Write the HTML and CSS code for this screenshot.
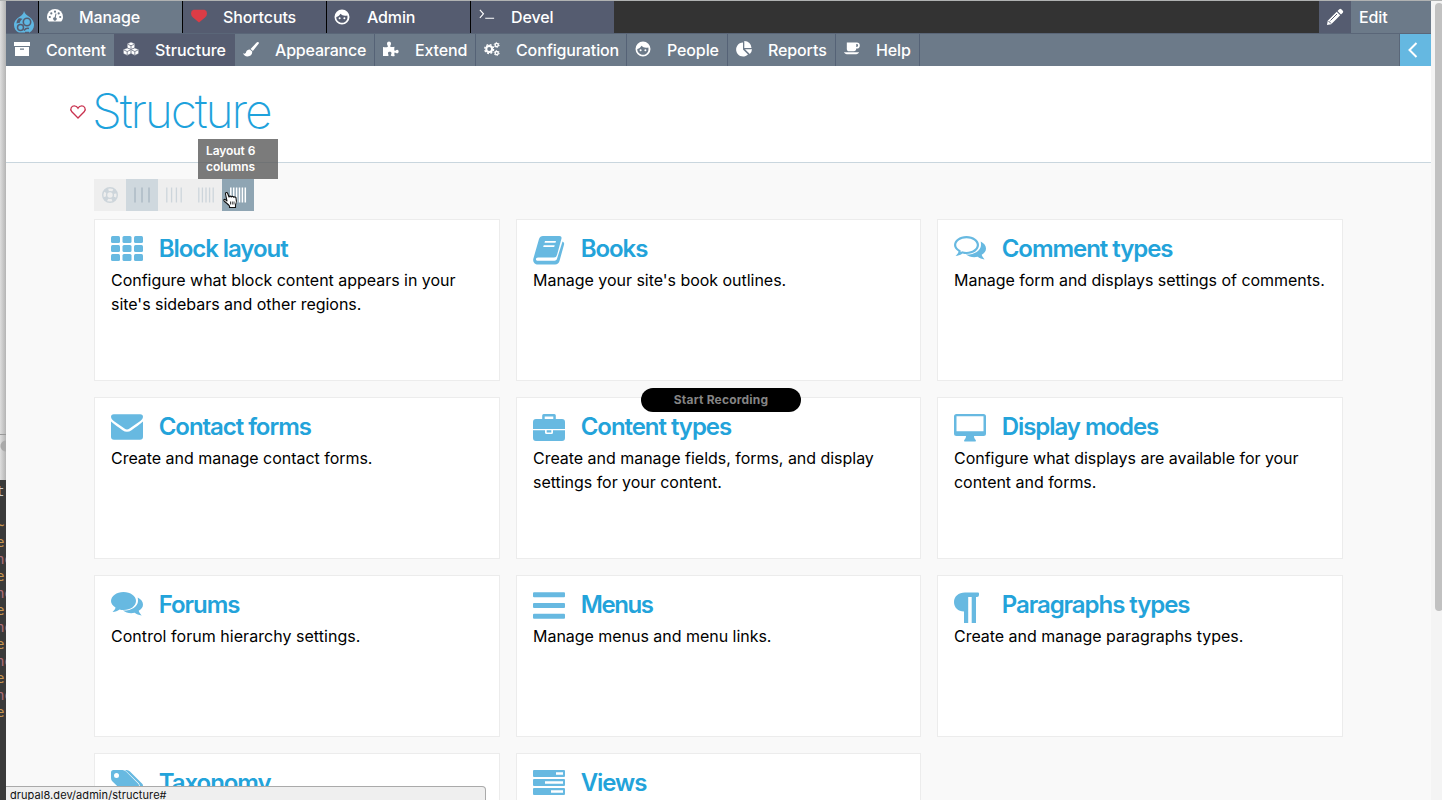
FILE: index.html
```html
<!DOCTYPE html>
<html lang="en">
<head>
<meta charset="utf-8">
<title>Structure</title>
<link rel="stylesheet" href="styles.css">
</head>
<body>
<svg class="defs" width="0" height="0">
  <defs>
    <symbol id="face" viewBox="0 0 16 16"><path fill-rule="evenodd" d="M8 .5a7.5 7.5 0 1 0 0 15 7.5 7.5 0 0 0 0-15zM2.3 8c2.2-.6 3.400-1.800 4.200-3.200C8 6.600 10.500 7.200 13.300 6.500c1 3.600-1.500 7.300-5.200 7.300C4.700 13.800 2.100 11.200 2.300 8z"/><circle cx="5.600" cy="9.200" r="1"/><circle cx="10.400" cy="9.200" r="1"/></symbol>
  </defs>
</svg>
<div class="desktop">
  <div class="behind">
    <div class="behind-window"><span class="knob"></span></div>
    <pre class="editor"><span class="w">t</span>

<span class="o">~</span>
<span class="o">e'</span>
<span class="p">ne</span>
<span class="o">e'</span>
<span class="p">ne</span>
<span class="o">e'</span>
<span class="p">ne</span>
<span class="o">e'</span>
<span class="p">ne</span>
<span class="o">e'</span>
<span class="p">ne</span>
<span class="o">e'</span></pre>
  </div>
  <div class="browser">
    <nav class="bar">
      <a class="home"><svg width="22" height="24" viewBox="0 0 22 24"><path fill="#5fb7e2" d="M11 1c.8 3 3 4 5.500 6C19 9 21 11.500 21 15c0 3.500-2 6.200-4.500 7.500H6C3 21.500 1 18.500 1 15c0-4 3-6.500 6-8.500C9 5 10.500 4 11 1z"/><path fill="#555c70" d="M5.500 8.500c1.500-.3 3-.2 4 .5-1.500 1-2.500 2.500-3 4.300-1-.5-2-.5-3 .2.100-2 .8-3.600 2-5z"/><circle cx="14" cy="12" r="3.700" fill="#5fb7e2" stroke="#555c70" stroke-width="1.600"/><circle cx="7.500" cy="17.500" r="3" fill="#5fb7e2" stroke="#555c70" stroke-width="1.500"/><path fill="none" stroke="#555c70" stroke-width="1.500" d="M11 20.500c1.500-2 3-2.500 5-2M12 22.500h4"/></svg></a>
      <a class="tab active"><svg width="16" height="16" viewBox="0 0 16 16"><path fill="#fff" d="M1.800 13.500C.5 12 0 10.500 0 9a8 8 0 0 1 16 0c0 1.500-.5 3-1.800 4.500z"/><g fill="#6c7a89"><circle cx="2.800" cy="9" r="1.100"/><circle cx="4.300" cy="5.400" r="1.100"/><circle cx="8" cy="3.700" r="1.100"/><circle cx="11.700" cy="5.400" r="1.100"/><circle cx="13.200" cy="9" r="1.100"/><path d="M8.500 5.500l1 .3-.8 3.600a1.700 1.700 0 1 1-1-.2z"/></g></svg><span>Manage</span></a>
      <a class="tab"><svg width="16" height="16" viewBox="0 0 16 16"><path fill="#dc3c46" d="M2.500 1.800h11Q16 2.500 16 5.500q0 2-2 4L8 14.500 2 9.500Q0 7.500 0 5.500 0 2.500 2.500 1.800z"/></svg><span>Shortcuts</span></a>
      <a class="tab face"><svg width="16" height="16" fill="#fff"><use href="#face"/></svg><span>Admin</span></a>
      <a class="tab devel"><svg width="18" height="16" viewBox="0 0 18 16" fill="none" stroke="#fff" stroke-width="1.300"><path d="M1 1l4 4.500L1 10M7 10.500h10"/></svg><span>Devel</span></a>
      <span class="fill"></span>
      <a class="pencil"><svg width="18" height="18" viewBox="0 0 18 18"><path fill="#fff" d="M11.500 3l1.800-1.800q1-.9 2 0l1.500 1.500q.9 1 0 2L15 6.500zM10.700 3.800l3.500 3.500-9 9L1 17l.7-4.200z"/><path stroke="#555c70" d="M2.500 13l2.500 2.500M11 6l-6.500 6.500"/></svg></a>
      <a class="edit">Edit</a>
    </nav>
    <nav class="tray">
      <a class="c1"><svg width="16" height="16" viewBox="0 0 16 16"><path fill="#fff" fill-rule="evenodd" d="M0 1h16v4H0zM1 6h14v9H1zm5 1.500v1.300h4V7.500z"/></svg><span>Content</span></a>
      <a class="c2 active"><svg width="18" height="16" viewBox="0 0 18 16"><g fill="#fff" stroke="#555c70" stroke-width=".5"><path d="M9 .2l4.200 1.900v4.500L9 8.600l-4.200-2V2.100z"/><path d="M4.700 6.800l4.300 1.900v4.500l-4.300 2-4.300-2V8.700zM13.300 6.800l4.300 1.900v4.500l-4.300 2-4.300-2V8.700z"/></g><path fill="none" stroke="#555c70" stroke-width=".8" d="M5.500 2.800L9 4.300l3.500-1.500M9 4.300v4M1.200 9.200l3.500 1.600 3.500-1.600M4.700 10.800v4M9.800 9.200l3.500 1.600 3.500-1.600M13.300 10.800v4"/></svg><span>Structure</span></a>
      <a class="c3"><svg width="17" height="17" viewBox="0 0 17 17" fill="#fff"><path d="M16 .5q1.300.4.600 2L10.500 10 8 8l6.500-7q.8-.8 1.500-.5zM7.300 8.600l2.500 2.100c.3 3-1.800 5.300-5 5.300C2.200 16 .8 14.500 0 12.500c1.500.8 2.600.7 3.200-1 .6-1.900 2-3 4.100-2.900z"/></svg><span>Appearance</span></a>
      <a class="c4"><svg width="16" height="16" viewBox="0 0 16 16" fill="#fff"><path d="M0 6c2 .5 4 .4 4.800-.3.500-.8-.8-1.500-.8-3 0-3 4-3 4 0 0 1.500-1.300 2.200-.6 3 .8.600 2.800.3 4.100 0-.3 2-.4 3.500.2 4 .8.400 1.300-1 2.500-1 2 0 1.900 3.600 0 3.600-1.200 0-1.700-1.200-2.500-.8-.6.500-.3 2 0 3.500-1.700.3-3.200.2-3.700-.3-.7-.8.500-1.300.5-2.500 0-1.800-3.500-1.900-3.500 0 0 1.200 1 1.700.4 2.500-.7.600-3.400.4-5.400.3z"/></svg><span>Extend</span></a>
      <a class="c5"><svg width="17" height="16" viewBox="0 0 17 16" fill="none" stroke="#fff"><circle cx="5.500" cy="8" r="3.100" stroke-width="2.200"/><circle cx="5.500" cy="8" r="4.700" stroke-width="1.500" stroke-dasharray="2.100 1.590"/><circle cx="13.500" cy="3.700" r="1.700" stroke-width="1.500"/><circle cx="13.500" cy="3.700" r="2.700" stroke-dasharray="1.400 1.427"/><circle cx="13.500" cy="12.300" r="1.700" stroke-width="1.500"/><circle cx="13.500" cy="12.300" r="2.700" stroke-dasharray="1.400 1.427"/></svg><span>Configuration</span></a>
      <a class="c6"><svg width="16" height="16" fill="#fff"><use href="#face"/></svg><span>People</span></a>
      <a class="c7"><svg width="16" height="16" viewBox="0 0 16 16" fill="#fff"><path d="M7 1.500V8.500l5 5A7 7 0 1 1 7 1.500zM8.300 0A7 7 0 0 1 15.500 7H8.300zM9 8.300h7a7 7 0 0 1-2.200 4.800z"/></svg><span>Reports</span></a>
      <a class="c8"><svg width="17" height="16" viewBox="0 0 17 16" fill="#fff"><path fill-rule="evenodd" d="M3 1h10.500a3.300 3.300 0 0 1 0 6.600H13c0 2-1 2.900-2.500 2.900h-5C4 10.500 3 9.500 3 8zm10 1.800v3h.5a1.500 1.500 0 0 0 0-3zM0 11.500h16c-.5 1.200-1.500 2-3 2H3c-1.500 0-2.500-.8-3-2z"/></svg><span>Help</span></a>
      <span class="fill"></span>
      <a class="collapse"><svg width="10" height="16" viewBox="0 0 10 16"><path fill="none" stroke="#fff" stroke-width="2" d="M8.500 1L1.500 8l7 7"/></svg></a>
    </nav>
    <header class="head">
      <svg class="fav" width="16" height="14" viewBox="0 0 16 14"><path fill="none" stroke="#c93350" stroke-width="1.300" d="M8 13L1.600 6.500C-.5 3.500 2 .8 4.300.8 6.300.8 7.400 2 8 3.100 8.600 2 9.700.8 11.700.8 14 .8 16.500 3.500 14.400 6.500z"/></svg>
      <h1>Structure</h1>
    </header>
    <main>
      <div class="layouts">
        <a><svg width="16" height="16" viewBox="0 0 16 16" fill="none" stroke="#cdd5db"><circle cx="8" cy="8" r="7.300" stroke-width="1.400"/><circle cx="8" cy="8" r="3.400" stroke-width="1.400"/><circle cx="8" cy="8" r="5.400" stroke-width="3.600" stroke-dasharray="4 4.482" stroke-dashoffset="-2.240"/></svg></a>
        <a class="on"><svg width="16" height="16" viewBox="0 0 16 16" stroke="#aebcc6" stroke-width="1.600"><path d="M1 .5v15M8 .5v15M15 .5v15"/></svg></a>
        <a><svg width="16" height="16" viewBox="0 0 16 16" stroke="#cdd5db" stroke-width="1.300"><path d="M.8 .5v15M5.600 .5v15M10.400 .5v15M15.200 .5v15"/></svg></a>
        <a><svg width="16" height="16" viewBox="0 0 16 16" stroke="#cdd5db" stroke-width="1.300"><path d="M.8 .5v15M4.400 .5v15M8 .5v15M11.600 .5v15M15.200 .5v15"/></svg></a>
        <a class="hover"><svg width="16" height="16" viewBox="0 0 16 16" stroke="#fff" stroke-width="1.500"><path d="M.8 .5v15M3.700 .5v15M6.600 .5v15M9.500 .5v15M12.400 .5v15M15.300 .5v15"/></svg>
          <span class="tip">Layout 6<br>columns</span>
          <svg class="pointer" width="16" height="18" viewBox="0 0 16 18"><path fill="#fff" stroke="#111" stroke-width="1.100" stroke-linejoin="round" d="M4 10L2.500 3c-.3-1.700 1.500-2.200 2.200-.5L6 6c.3-1.200 2-1.200 2.300 0 .6-1 2.200-.8 2.400.3.800-.8 2.200-.4 2.300.7.800 2.500.7 4.500-.5 7V16.500h-6V15C5 13 3 12 1 9.800c-.7-1 .8-2 1.700-1z"/><path stroke="#111" stroke-width=".8" d="M7.500 10.500v3M9.300 10.500v3M11 10.500v3"/></svg>
        </a>
      </div>
      <div class="cards">
        <section class="card"><h2><svg width="32" height="32" viewBox="0 0 32 32"><g><rect y="3" width="9" height="7" rx="1.500"/><rect x="11.500" y="3" width="9" height="7" rx="1.500"/><rect x="23" y="3" width="9" height="7" rx="1.500"/><rect y="12" width="9" height="7" rx="1.500"/><rect x="11.500" y="12" width="9" height="7" rx="1.500"/><rect x="23" y="12" width="9" height="7" rx="1.500"/><rect y="21" width="9" height="7" rx="1.500"/><rect x="11.500" y="21" width="9" height="7" rx="1.500"/><rect x="23" y="21" width="9" height="7" rx="1.500"/></g></svg><span>Block layout</span></h2><p>Configure what block content appears in your<br>site's sidebars and other regions.</p></section>
        <section class="card"><h2><svg width="32" height="32" viewBox="0 0 32 32"><path fill-rule="evenodd" d="M10 3h16.500q2.500 0 2 2.500L24 22q-.6 2.500-3 2.500H5c-1.800 0-2.500 1.500-1.700 2.700.4.500 1 .6 1.700.6h16.500c1.200 0 2-.5 2.400-1.700L29.500 8.500c1.500.7 1.900 1.700 1.500 3.200L26.500 28c-.7 2.200-2 3.500-4.500 3.500H5c-3.500 0-5.500-3-4.600-6L6 6c.7-2 2-3 4-3zm2 5l-.5 1.700h11L23 8zm-1.300 4.300l-.5 1.700h11l.5-1.700z"/></svg><span>Books</span></h2><p>Manage your site's book outlines.</p></section>
        <section class="card"><h2><svg width="32" height="32" viewBox="0 0 32 32"><path fill-rule="evenodd" d="M12.500 3C19.500 3 25 7 25 12s-5.500 9-12.500 9q-2 0-4-.5C6.500 22 4.500 22.600 1.500 23c1.800-1.600 2.700-2.900 3-4.500C1.600 16.800 0 14.500 0 12c0-5 5.500-9 12.500-9zm0 2.200C6.800 5.200 2.200 8.300 2.200 12c0 2.200 1.700 4 4.500 5.600v1.600l1.300-.9c1.500.4 3 .6 4.500.6 5.700 0 10.300-3.200 10.300-6.900s-4.600-6.800-10.300-6.800z"/><path d="M26.700 8.500C30 10.200 32 12.600 32 15.500c0 2.700-1.600 4.800-4.300 6.300.4 1.500 1.500 3 3 4.700-3-.3-5.200-1.300-7-2.700-4.300.9-8.800.1-11.800-2.200 8 .3 15.100-3.800 15.100-9.600q0-2-.3-3.500z"/></svg><span>Comment types</span></h2><p>Manage form and displays settings of comments.</p></section>
        <section class="card"><h2><svg width="32" height="32" viewBox="0 0 32 32"><path d="M2.800 3.200h26.400Q32 3.200 32 6q0 2-2.700 4L18.500 17.500q-2.500 1.800-5 0L2.700 10Q0 8 0 6q0-2.800 2.800-2.800zM0 10.500c3.500 3.200 7.500 5.800 11.500 8.700q4.500 3.300 9 0C24.500 16.300 28.500 13.700 32 10.500V25.800q0 3-3 3H3q-3 0-3-3z"/></svg><span>Contact forms</span></h2><p>Create and manage contact forms.</p></section>
        <section class="card"><h2><svg width="32" height="32" viewBox="0 0 32 32"><path fill-rule="evenodd" d="M9.200 8V4.500Q9.200 3 10.700 3h10.600q1.500 0 1.500 1.500V8H29q3 0 3 3v7H0v-7q0-3 3-3zm2.500 0h8.600V5.500h-8.600zM0 19.300h12v2.200q0 1.500 1.500 1.500h5q1.500 0 1.500-1.500v-2.200h12V27q0 3-3 3H3q-3 0-3-3zM13.700 19.300h4.600v2.200h-4.600z"/></svg><span>Content types</span></h2><p>Create and manage fields, forms, and display<br>settings for your content.</p></section>
        <section class="card"><h2><svg width="32" height="32" viewBox="0 0 32 32"><path fill-rule="evenodd" d="M2.500 3h27Q32 3 32 5.500v17Q32 25 29.500 25H20c0 2 .8 2.800 1.500 3.700.8.900.5 1.800-.7 1.800h-9.600c-1.200 0-1.500-.9-.7-1.800.700-.9 1.500-1.700 1.500-3.700H2.500Q0 25 0 22.500v-17Q0 3 2.500 3zm0 2.300v15h27v-15z"/></svg><span>Display modes</span></h2><p>Configure what displays are available for your<br>content and forms.</p></section>
        <section class="card"><h2><svg width="32" height="32" viewBox="0 0 32 32"><path d="M12.500 3C19.500 3 25 7 25 12s-5.500 9-12.500 9q-2 0-4-.5C6.500 22 4.500 22.600 1.500 23c1.800-1.600 2.700-2.900 3-4.500C1.600 16.800 0 14.500 0 12c0-5 5.500-9 12.500-9z"/><path d="M26.700 8.500C30 10.200 32 12.600 32 15.500c0 2.700-1.600 4.800-4.300 6.300.4 1.500 1.500 3 3 4.700-3-.3-5.200-1.300-7-2.700-4.300.9-8.800.1-11.800-2.200 8 .3 15.100-3.800 15.100-9.600q0-2-.3-3.500z"/></svg><span>Forums</span></h2><p class="wide">Control forum hierarchy settings.</p></section>
        <section class="card"><h2><svg width="32" height="32" viewBox="0 0 32 32"><rect y="3.300" width="32" height="5" rx="1"/><rect y="14" width="32" height="5" rx="1"/><rect y="24.700" width="32" height="5" rx="1"/></svg><span class="tight">Menus</span></h2><p>Manage menus and menu links.</p></section>
        <section class="card"><h2><svg width="32" height="32" viewBox="0 0 32 32"><path d="M11 3.500h13q1 0 1 1V6q0 2-2 2h-1v26h-4.300V8h-3.500v26H10V22.500C4 22.500 0 18.500 0 13S4.500 3.500 11 3.500z"/></svg><span>Paragraphs types</span></h2><p>Create and manage paragraphs types.</p></section>
        <section class="card"><h2><svg width="32" height="32" viewBox="0 0 32 32"><path fill-rule="evenodd" d="M2.500 3h9q2 0 3.500 1.500L27 16.500q2 2 0 4L19.500 28q-2 2-4 0L1.500 14.500Q0 13 0 11V5.500Q0 3 2.500 3zM5.500 6a2.500 2.500 0 1 0 0 5 2.500 2.500 0 0 0 0-5z"/><path d="M14 3h1.500q2 0 3.500 1.500L31 16.500q2 2 0 4L23.500 28q-1.500 1.500-3.500.5L28 20.500q1.500-2 0-4z"/></svg><span>Taxonomy</span></h2></section>
        <section class="card"><h2><svg width="32" height="32" viewBox="0 0 32 32"><path fill-rule="evenodd" d="M1 3h30q1 0 1 1v5q0 1-1 1H1q-1 0-1-1V4q0-1 1-1zm22 2.300v2.400h7V5.300zM1 12h30q1 0 1 1v5q0 1-1 1H1q-1 0-1-1v-5q0-1 1-1zm11 2.300v2.400h18v-2.400zM1 21h30q1 0 1 1v5q0 1-1 1H1q-1 0-1-1v-5q0-1 1-1zm17 2.300v2.400h12v-2.400z"/></svg><span>Views</span></h2></section>
      </div>
    </main>
  </div>
  <div class="scroll"><span></span></div>
  <div class="record">Start Recording</div>
  <div class="status">drupal8.dev/admin/structure#</div>
</div>
</body>
</html>
```
FILE: styles.css
```css
* { box-sizing: border-box; }
body { margin: 0; font-family: Inter, "Liberation Sans", sans-serif; font-size: 16px; }
svg { display: block; flex: none; overflow: visible; }
.defs { position: absolute; }
.desktop { position: relative; display: grid; grid-template-columns: 6px 1425px 11px; width: 1442px; height: 800px; overflow: hidden; border-top: 1px solid #b0b2b2; }
.behind { display: flex; flex-direction: column; height: 799px; overflow: hidden; background: #3a3a3a; }
.behind-window { height: 479px; flex: none; padding-top: 433px; background: linear-gradient(90deg, #dedede, #b4b4b4); }
.knob { display: block; height: 23px; border-top: 1px solid #999; background: radial-gradient(circle at 6px 11px, #aaa 5px, transparent 6px); }
.editor { margin: 3px 0 0 -4px; font: 14px/17px "DejaVu Sans Mono", monospace; }
.editor .w { color: #ccc; }
.editor .o { color: #c89650; }
.editor .p { color: #b06f78; }
.browser { height: 799px; overflow: hidden; background: #f9f9f9; }
.bar, .tray { display: flex; color: #fff; font-weight: 500; letter-spacing: -.12px; }
.bar { height: 32px; background: #333; }
.bar a { display: flex; line-height: 32px; background: #555c70; }
.bar .home { width: 33px; padding: 9px 0 0 7px; border-right: 1px solid #000; }
.bar .tab { width: 144px; padding-left: 8px; border-right: 1px solid #000; }
.bar .tab svg { margin: 7px 16px 0 0; width: 16px; }
.bar .face svg { margin: 8px 17px 0 -1px; }
.bar .active, .bar .edit { background: #6c7a89; }
.bar .devel { width: 143px; border-right: 0; }
.fill { flex: 1; }
.bar .pencil { width: 32px; padding: 7px; }
.bar .edit { width: 80px; padding-left: 8px; }
.tray { height: 33px; border-top: 1px solid #5a6678; background: #6c7a89; }
.tray a { display: flex; line-height: 32px; padding-left: 8px; border-right: 1px solid #556276; }
.tray a svg { width: 16px; margin: 7px 16px 0 0; }
.tray .active { background: #555c70; }
.c1 { width: 108px; } .c2 { width: 121px; } .c3 { width: 140px; } .c4 { width: 101px; }
.c5 { width: 151px; } .c6 { width: 101px; } .c7 { width: 108px; } .c8 { width: 84px; }
.tray .c1 { border-right: 0; } .tray .c2 { border-right: 0; padding-left: 9px; letter-spacing: -.02px; }
.tray .c3 { letter-spacing: -.2px; }
.tray .collapse { width: 32px; padding-left: 8px; border-left: 1px solid #5a6678; border-right: 0; background: #65b8e1; }
.tray .collapse svg { width: 10px; margin: 8px 0 0; }
.head { display: flex; height: 97px; padding: 21px 0 0 64px; background: #fff; border-bottom: 1px solid #c9d6de; }
.fav { margin: 18px 6px 0 0; }
h1 { margin: 0; font-size: 48px; line-height: 48px; font-weight: 200; letter-spacing: -2.15px; color: #1ea2dc; }
main { padding: 16px 88px 0; }
.layouts { display: flex; width: 160px; height: 32px; background: #eee; }
.layouts a { position: relative; width: 32px; height: 32px; padding: 8px; }
.layouts .on { background: #cfd8de; }
.layouts .hover { background: #8fa5b3; }
.tip { position: absolute; left: -24px; top: -40px; width: 80px; height: 40px; padding: 4px 8px; background: rgba(90, 90, 90, .8); color: #fff; font-size: 12px; line-height: 16px; font-weight: 600; letter-spacing: -.08px; }
.pointer { position: absolute; left: 1px; top: 12px; }
.cards { display: grid; grid-template-columns: 406px 405px 406px; grid-auto-rows: 162px; gap: 16px; margin-top: 8px; }
.card { padding: 16px; background: #fff; border: 1px solid #ececec; }
.card h2 { display: flex; gap: 16px; margin: 0 0 8px; height: 24px; font-size: 24px; line-height: 26px; font-weight: 600; letter-spacing: -1.05px; color: #23a3da; }
.card h2 span { margin-left: -.3px; }
.card h2 .tight { letter-spacing: -1.4px; }
.card h2 svg { margin-top: -3px; fill: #67b9e1; }
.card p { margin: 0; line-height: 24px; letter-spacing: -.03px; color: #000; white-space: nowrap; }
.card .wide { letter-spacing: .04px; }
.scroll { padding: 2px 0 0 4px; background: #f4f4f4; }
.scroll span { display: block; width: 8px; height: 608px; border-radius: 4px; background: #c1c1c1; }
.record { position: absolute; left: 641px; top: 387px; width: 160px; height: 24px; border-radius: 12px; background: #000; color: #858585; font-size: 12px; line-height: 24px; font-weight: 700; letter-spacing: .2px; text-align: center; }
.status { position: absolute; left: 6px; top: 785px; width: 480px; height: 20px; padding-left: 4px; background: #efefef; border: 1px solid #aaa; border-left: 0; border-radius: 0 4px 0 0; font-size: 11px; line-height: 17px; letter-spacing: .07px; color: #111; }
```
